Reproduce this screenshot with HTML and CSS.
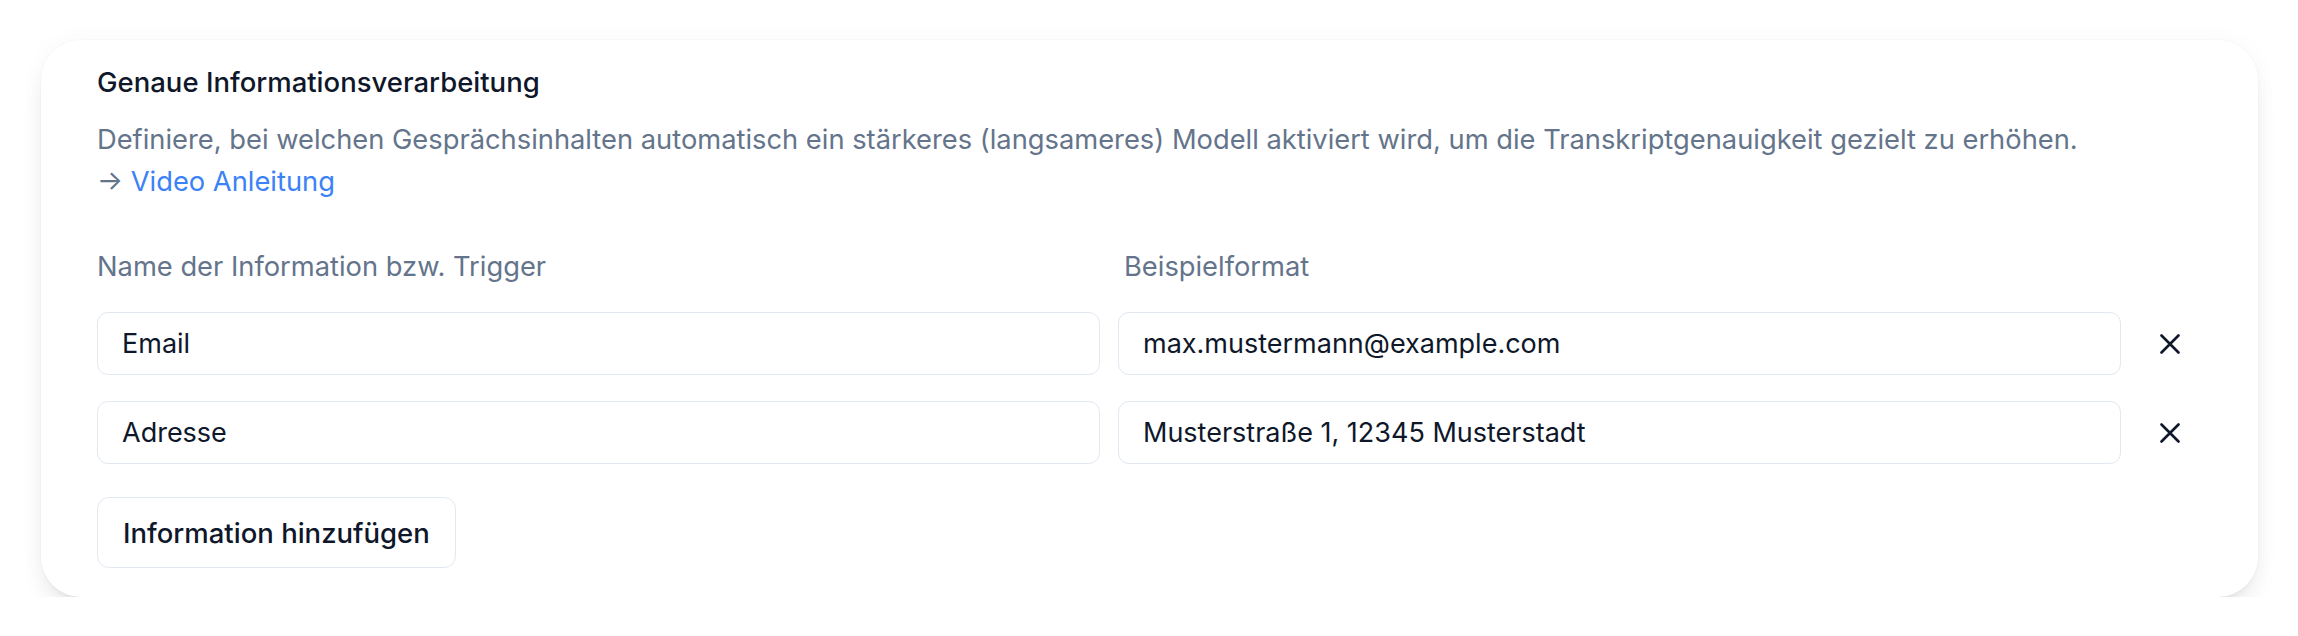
FILE: index.html
```html
<!DOCTYPE html>
<html lang="de">
<head>
<meta charset="utf-8">
<title>Genaue Informationsverarbeitung</title>
<link rel="stylesheet" href="styles.css">
</head>
<body>
<section class="card">
  <h2 class="title">Genaue Informationsverarbeitung</h2>
  <p class="desc">Definiere, bei welchen Gesprächsinhalten automatisch ein stärkeres (langsameres) Modell aktiviert wird, um die Transkriptgenauigkeit gezielt zu erhöhen.<br><span class="arrow">→</span> <a class="link" href="#">Video Anleitung</a></p>
  <div class="grid">
    <div class="label">Name der Information bzw. Trigger</div>
    <div class="label label-second">Beispielformat</div>
    <div></div>
    <div class="input">Email</div>
    <div class="input">max.mustermann@example.com</div>
    <button class="remove" type="button" aria-label="Entfernen"><svg width="20" height="20" viewBox="0 0 20 20"><path d="M1.5 1.5 18.5 18.5M18.5 1.5 1.5 18.5" stroke="#0f172a" stroke-width="2.6" stroke-linecap="round" fill="none"/></svg></button>
    <div class="input">Adresse</div>
    <div class="input">Musterstraße 1, 12345 Musterstadt</div>
    <button class="remove" type="button" aria-label="Entfernen"><svg width="20" height="20" viewBox="0 0 20 20"><path d="M1.5 1.5 18.5 18.5M18.5 1.5 1.5 18.5" stroke="#0f172a" stroke-width="2.6" stroke-linecap="round" fill="none"/></svg></button>
  </div>
  <button class="add" type="button">Information hinzufügen</button>
</section>
</body>
</html>
```
FILE: styles.css
```css
html, body {
  margin: 0;
  background: #ffffff;
}
body {
  padding: 40px 40px 0 41px;
  font-family: Inter, "Noto Sans", sans-serif;
  color: #0f172a;
}
.card {
  background: #ffffff;
  border-radius: 40px;
  padding: 21px 56px 29px 56px;
  box-shadow: 0 0 0 1px rgba(0, 0, 0, 0.015), 0 0 24px rgba(0, 0, 0, 0.03), 0 17px 26px -5px rgba(0, 0, 0, 0.08), 0 7px 10px -7px rgba(0, 0, 0, 0.08);
}
.title {
  margin: 0;
  font-size: 27.5px;
  line-height: 42px;
  font-weight: 500;
  color: #0f172a;
}
.desc {
  margin: 16px 0 0;
  font-size: 27.3px;
  line-height: 42px;
  color: #64748b;
}
.arrow {
  color: #64748b;
}
.link {
  color: #3b82f6;
  text-decoration: none;
}
.grid {
  margin-top: 43px;
  display: grid;
  grid-template-columns: 1fr 1fr 63px;
  column-gap: 18px;
  row-gap: 26px;
}
.label {
  font-size: 27.3px;
  line-height: 42px;
  color: #64748b;
  margin-bottom: -2px;
}
.label-second {
  padding-left: 6px;
}
.input {
  height: 63px;
  box-sizing: border-box;
  border: 1.5px solid #e2e8f0;
  border-radius: 11px;
  padding: 0 24px;
  display: flex;
  align-items: center;
  font-size: 27px;
  color: #0f172a;
}
.remove {
  height: 63px;
  border: 0;
  background: transparent;
  padding: 0 0 0 21px;
  display: flex;
  align-items: center;
  justify-content: flex-start;
}
.add {
  margin-top: 33px;
  height: 71px;
  box-sizing: border-box;
  border: 1.5px solid #e2e8f0;
  border-radius: 12px;
  background: #ffffff;
  padding: 0 25px;
  font-family: inherit;
  font-size: 27.5px;
  font-weight: 500;
  color: #0f172a;
}
```
